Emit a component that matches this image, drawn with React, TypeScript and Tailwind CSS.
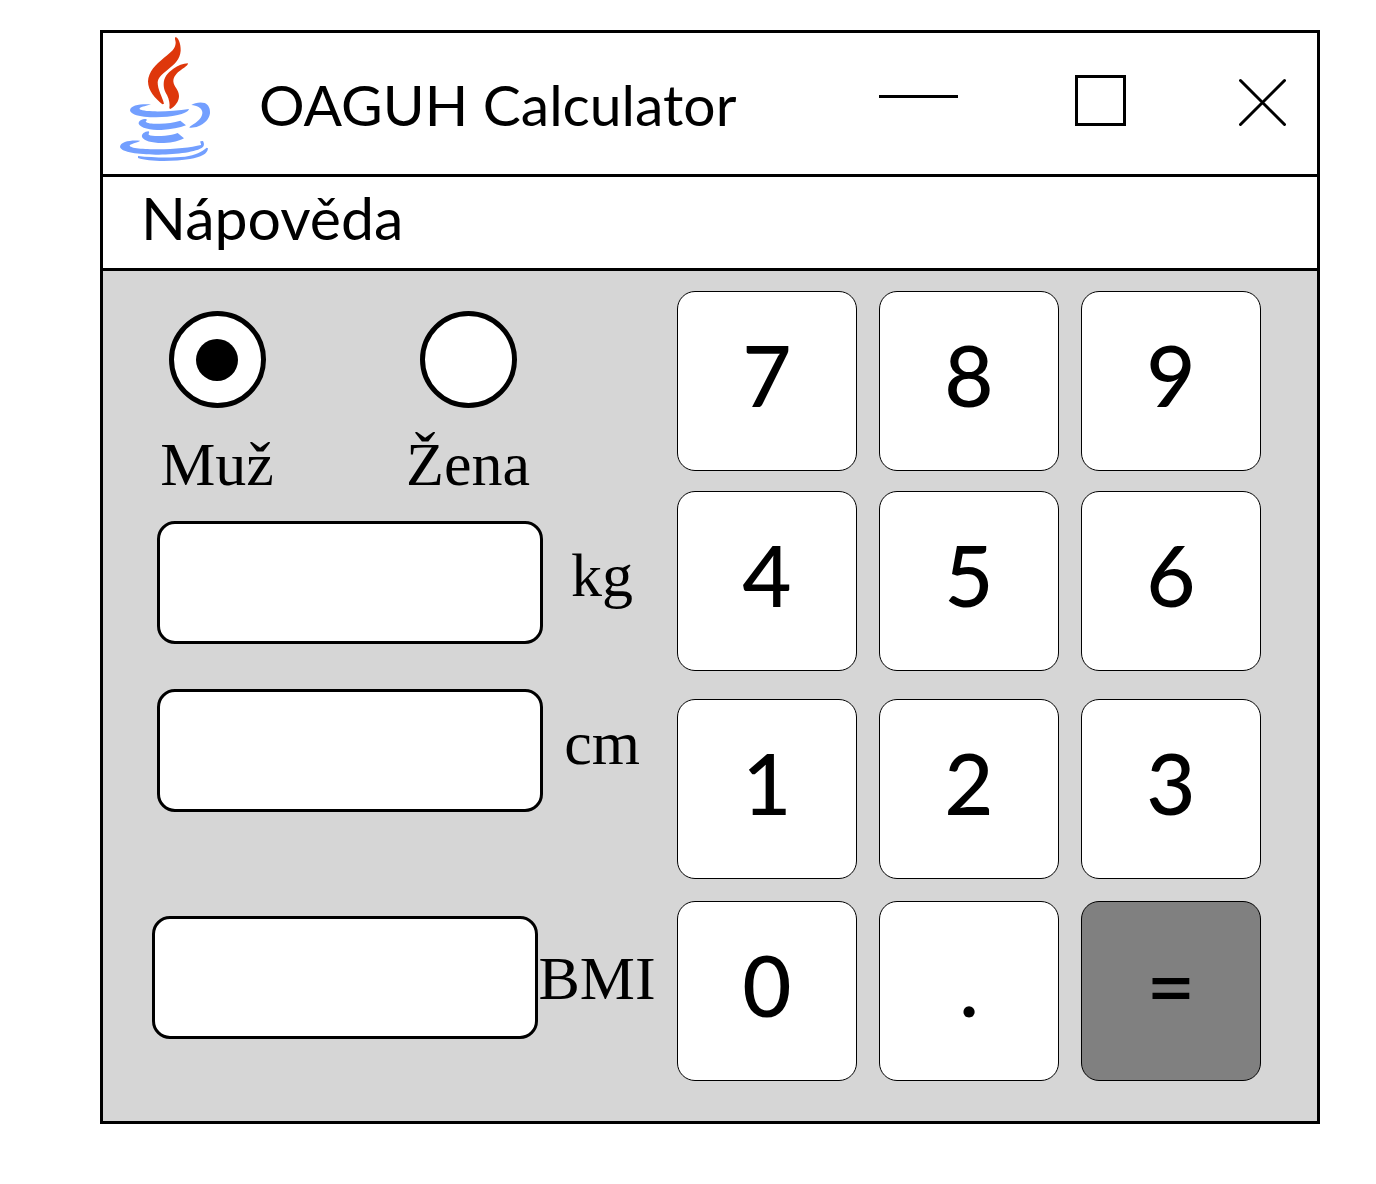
import { useState } from "react";

const KEYS = ["7", "8", "9", "4", "5", "6", "1", "2", "3", "0", ".", "="];

function JavaLogo() {
  return (
    <svg viewBox="72 36 273 378" className="mb-[3px] h-[126px] w-[91px] shrink-0" aria-hidden="true">
      <g fill="#de370b">
        <path d="M239 39C246 40 255 58 254 80C252 106 237 119 215 137C198 151 186 160 185 175C185 197 198 217 204 239L199 241C178 224 156 201 156 172C157 143 179 122 204 101C226 84 238 75 239 57C240 51 234 43 239 39Z" />
        <path d="M276 118C276 125 264 131 255 138C240 148 232 160 232 172C233 188 249 198 249 216C249 233 237 247 223 255L220 253C222 240 220 228 213 213C207 202 203 195 203 180C203 160 214 147 232 134C246 125 261 118 276 118Z" />
      </g>
      <g fill="#739fff">
        <path d="M165 241C153 246 137 247 131 253C128 258 143 261 170 262C207 263 245 260 279 255C277 264 262 269 245 273C216 280 177 281 145 278C122 276 103 269 102 259C103 242 137 239 165 241Z" />
        <path d="M286 243C295 237 312 233 326 237C338 242 343 255 342 268C340 285 326 300 307 307C298 311 287 312 280 311C281 306 290 303 298 297C311 288 320 277 319 264C317 250 302 245 286 243Z" />
        <path d="M150 285C155 287 151 290 149 293C153 298 168 299 183 299C209 300 231 296 253 290L270 304C251 311 226 317 196 318C163 318 133 312 128 299C127 291 137 285 150 285Z" />
        <path d="M158 322C162 325 157 328 158 332C168 337 188 337 207 335C222 334 234 331 245 327L264 343C249 351 231 356 204 357C171 358 143 351 138 339C136 330 145 323 158 322Z" />
        <path d="M132 350C131 355 108 357 101 364C100 374 146 376 185 376C236 376 287 370 315 363C316 360 312 356 313 352L321 351C325 359 326 366 317 372C293 386 232 392 179 392C129 391 76 385 72 369C72 352 107 347 132 350Z" />
        <path d="M126 396C169 401 226 402 267 398C299 393 317 384 332 371L336 373C335 390 315 400 282 405C235 413 158 414 126 402Z" />
      </g>
    </svg>
  );
}

function TitleBar() {
  return (
    <header className="flex min-h-[144px] items-center border-b-[3px] border-black bg-white pr-[31px] pb-1.5 pl-[17px]">
      <JavaLogo />
      <h1 className="ml-12 pt-2 text-[57px] leading-none whitespace-nowrap">OAGUH Calculator</h1>
      <div className="ml-auto flex items-center gap-[113px]">
        <button type="button" aria-label="Minimalizovat">
          <svg width="83" height="51" className="block" shapeRendering="crispEdges">
            <rect x="0" y="20" width="79" height="3" />
          </svg>
        </button>
        <button type="button" aria-label="Maximalizovat">
          <span className="block size-[51px] border-[3px] border-black" />
        </button>
        <button type="button" aria-label="Zavřít">
          <svg width="47" height="51" className="block" stroke="#000" strokeWidth="3" strokeLinecap="round">
            <path d="M1.5 5.5L45.5 49.5M45.5 5.5L1.5 49.5" />
          </svg>
        </button>
      </div>
    </header>
  );
}

function SexOption({ id, label, checked, onSelect }: { id: string; label: string; checked: boolean; onSelect: () => void }) {
  return (
    <div className="flex w-[130px] flex-col items-center gap-5">
      <input
        type="radio"
        name="sex"
        id={id}
        checked={checked}
        onChange={onSelect}
        className="grid size-[97px] appearance-none place-content-center rounded-full border-[5px] border-black bg-white before:size-[42px] before:rounded-full checked:before:bg-black"
      />
      <label htmlFor={id} className="text-[62px] leading-[72px]">
        {label}
      </label>
    </div>
  );
}

const FIELD = "h-[123px] w-full min-w-0 flex-1 rounded-[18px] border-[3px] border-black bg-white px-5 text-[57px]";
const UNIT = "w-[118px] shrink-0 text-center text-[62px] leading-[72px] whitespace-nowrap";

export default function App() {
  const [sex, setSex] = useState("male");
  const [weight, setWeight] = useState("");
  const [height, setHeight] = useState("");

  return (
    <div className="min-h-screen bg-white pt-[30px] pr-14 pb-[60px] pl-[100px] font-['Lato',sans-serif] text-black">
      <div className="border-[3px] border-black bg-[#d6d6d6]">
        <TitleBar />
        <nav className="flex min-h-[94px] items-center border-b-[3px] border-black bg-white pb-2.5 pl-[38px]">
          <button type="button" className="text-[59px] leading-none">
            Nápověda
          </button>
        </nav>
        <main className="flex items-start gap-4 pt-5 pr-14 pb-10 pl-[49px]">
          <form className="min-w-0 flex-1 pt-5 font-['Liberation_Serif',serif]">
            <div className="flex gap-[121px]">
              <SexOption id="male" label="Muž" checked={sex === "male"} onSelect={() => setSex("male")} />
              <SexOption id="female" label="Žena" checked={sex === "female"} onSelect={() => setSex("female")} />
            </div>
            <div className="mt-[21px] flex flex-col gap-[45px] pl-[5px]">
              <div className="flex items-center">
                <input id="weight" value={weight} onChange={(e) => setWeight(e.target.value)} className={FIELD} />
                <label htmlFor="weight" className={`${UNIT} pb-4`}>
                  kg
                </label>
              </div>
              <div className="flex items-center">
                <input id="height" value={height} onChange={(e) => setHeight(e.target.value)} className={FIELD} />
                <label htmlFor="height" className={`${UNIT} pb-4`}>
                  cm
                </label>
              </div>
            </div>
            <div className="mt-[104px] flex items-center pr-[5px]">
              <input id="bmi" readOnly value="" className={FIELD} />
              <label htmlFor="bmi" className={UNIT}>
                BMI
              </label>
            </div>
          </form>
          <div className="grid shrink-0 grid-cols-[repeat(3,180px)] grid-rows-[200px_208px_202px_180px] items-start gap-x-[22px]">
            {KEYS.map((key) => (
              <button
                key={key}
                type="button"
                className={`h-[180px] rounded-[18px] border border-black pb-3.5 text-[85px] leading-none font-medium ${
                  key === "=" ? "bg-[#808080]" : "bg-white"
                }`}
              >
                {key}
              </button>
            ))}
          </div>
        </main>
      </div>
    </div>
  );
}
